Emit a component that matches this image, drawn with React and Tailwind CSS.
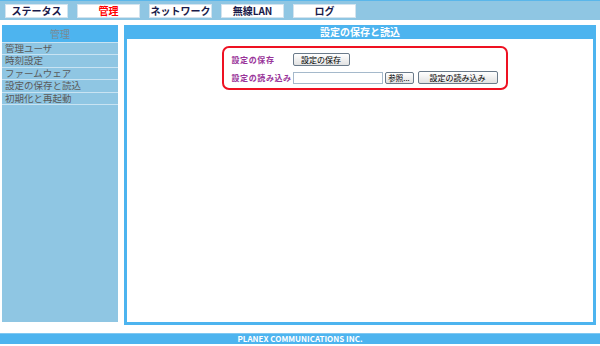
const tabs = [
  { label: "ステータス" },
  { label: "管理", active: true },
  { label: "ネットワーク" },
  { label: "無線LAN" },
  { label: "ログ" },
];

const menu = ["管理ユーザ", "時刻設定", "ファームウェア", "設定の保存と読込", "初期化と再起動"];

const font = { fontFamily: '"Noto Sans CJK JP", "Noto Sans", sans-serif' };

export default function App() {
  return (
    <div className="w-[600px] h-[346px] bg-white flex flex-col overflow-hidden" style={font}>
      {/* top nav */}
      <div className="h-[20px] bg-[#8fc6e3] border-t border-[#5ab6ea] flex items-center gap-[9px] pl-[5px]">
        {tabs.map((t) => (
          <div
            key={t.label}
            className={`w-[63px] h-[14px] bg-white border border-[#d3e3ee] flex items-center justify-center text-[10px] font-bold leading-none ${
              t.active ? "text-[#ff0000]" : "text-[#1a1a4a]"
            }`}
          >
            {t.label}
          </div>
        ))}
      </div>

      <div className="flex mt-[5px] pl-[2px] gap-[6px]">
        {/* sidebar */}
        <div className="w-[116px] h-[297px] bg-[#8fc6e3] flex flex-col">
          <div className="h-[17px] bg-[#4db4ef] flex items-center justify-center text-[10px] text-[#7a8a96] leading-none">
            管理
          </div>
          {menu.map((m) => (
            <div
              key={m}
              className="h-[12.4px] border-t border-[#c9e3f2] flex items-center pl-[3px] text-[9.5px] text-[#5a5a5a] leading-none whitespace-nowrap overflow-hidden"
            >
              {m}
            </div>
          ))}
          <div className="border-t border-[#c9e3f2]" />
        </div>

        {/* main panel */}
        <div className="w-[472px] h-[300px] border-[3px] border-t-0 border-[#4db4ef] flex flex-col">
          <div className="h-[14px] bg-[#4db4ef] flex items-center justify-center text-[10px] font-bold text-white leading-none">
            設定の保存と読込
          </div>
          <div className="flex justify-center pt-[7px] pl-[9px]">
            <div className="w-[286px] h-[44px] border-2 border-[#ee1122] rounded-[7px] flex flex-col pl-[8px] pt-[5px] gap-[5px]">
              <div className="flex items-center h-[13px]">
                <span className="w-[61px] text-[8px] font-bold tracking-[0.6px] text-[#993399] leading-none whitespace-nowrap">設定の保存</span>
                <button className="w-[57px] h-[13px] border border-[#6a7a8a] rounded-[2px] bg-gradient-to-b from-white to-[#e2e2e2] text-[8px] text-black leading-none flex items-center justify-center">
                  設定の保存
                </button>
              </div>
              <div className="flex items-center h-[13px]">
                <span className="w-[61px] text-[8px] font-bold tracking-[0.6px] text-[#993399] leading-none whitespace-nowrap">設定の読み込み</span>
                <div className="w-[90px] h-[12px] border border-[#a5b9cb] bg-white" />
                <button className="ml-[2px] w-[29px] h-[12px] border border-[#6a7a8a] rounded-[2px] bg-gradient-to-b from-white to-[#e2e2e2] text-[7.5px] text-black leading-none flex items-center justify-center whitespace-nowrap">
                  参照...
                </button>
                <button className="ml-[4px] w-[80px] h-[13px] border border-[#6a7a8a] rounded-[2px] bg-gradient-to-b from-white to-[#e2e2e2] text-[8px] text-black leading-none flex items-center justify-center whitespace-nowrap">
                  設定の読み込み
                </button>
              </div>
            </div>
          </div>
        </div>
      </div>

      {/* footer */}
      <div className="mt-[8px] h-[11px] bg-[#4db4ef] border-t border-[#7fc8f2] flex items-center justify-center text-[8px] font-bold text-white leading-none">
        PLANEX COMMUNICATIONS INC.
      </div>
    </div>
  );
}
